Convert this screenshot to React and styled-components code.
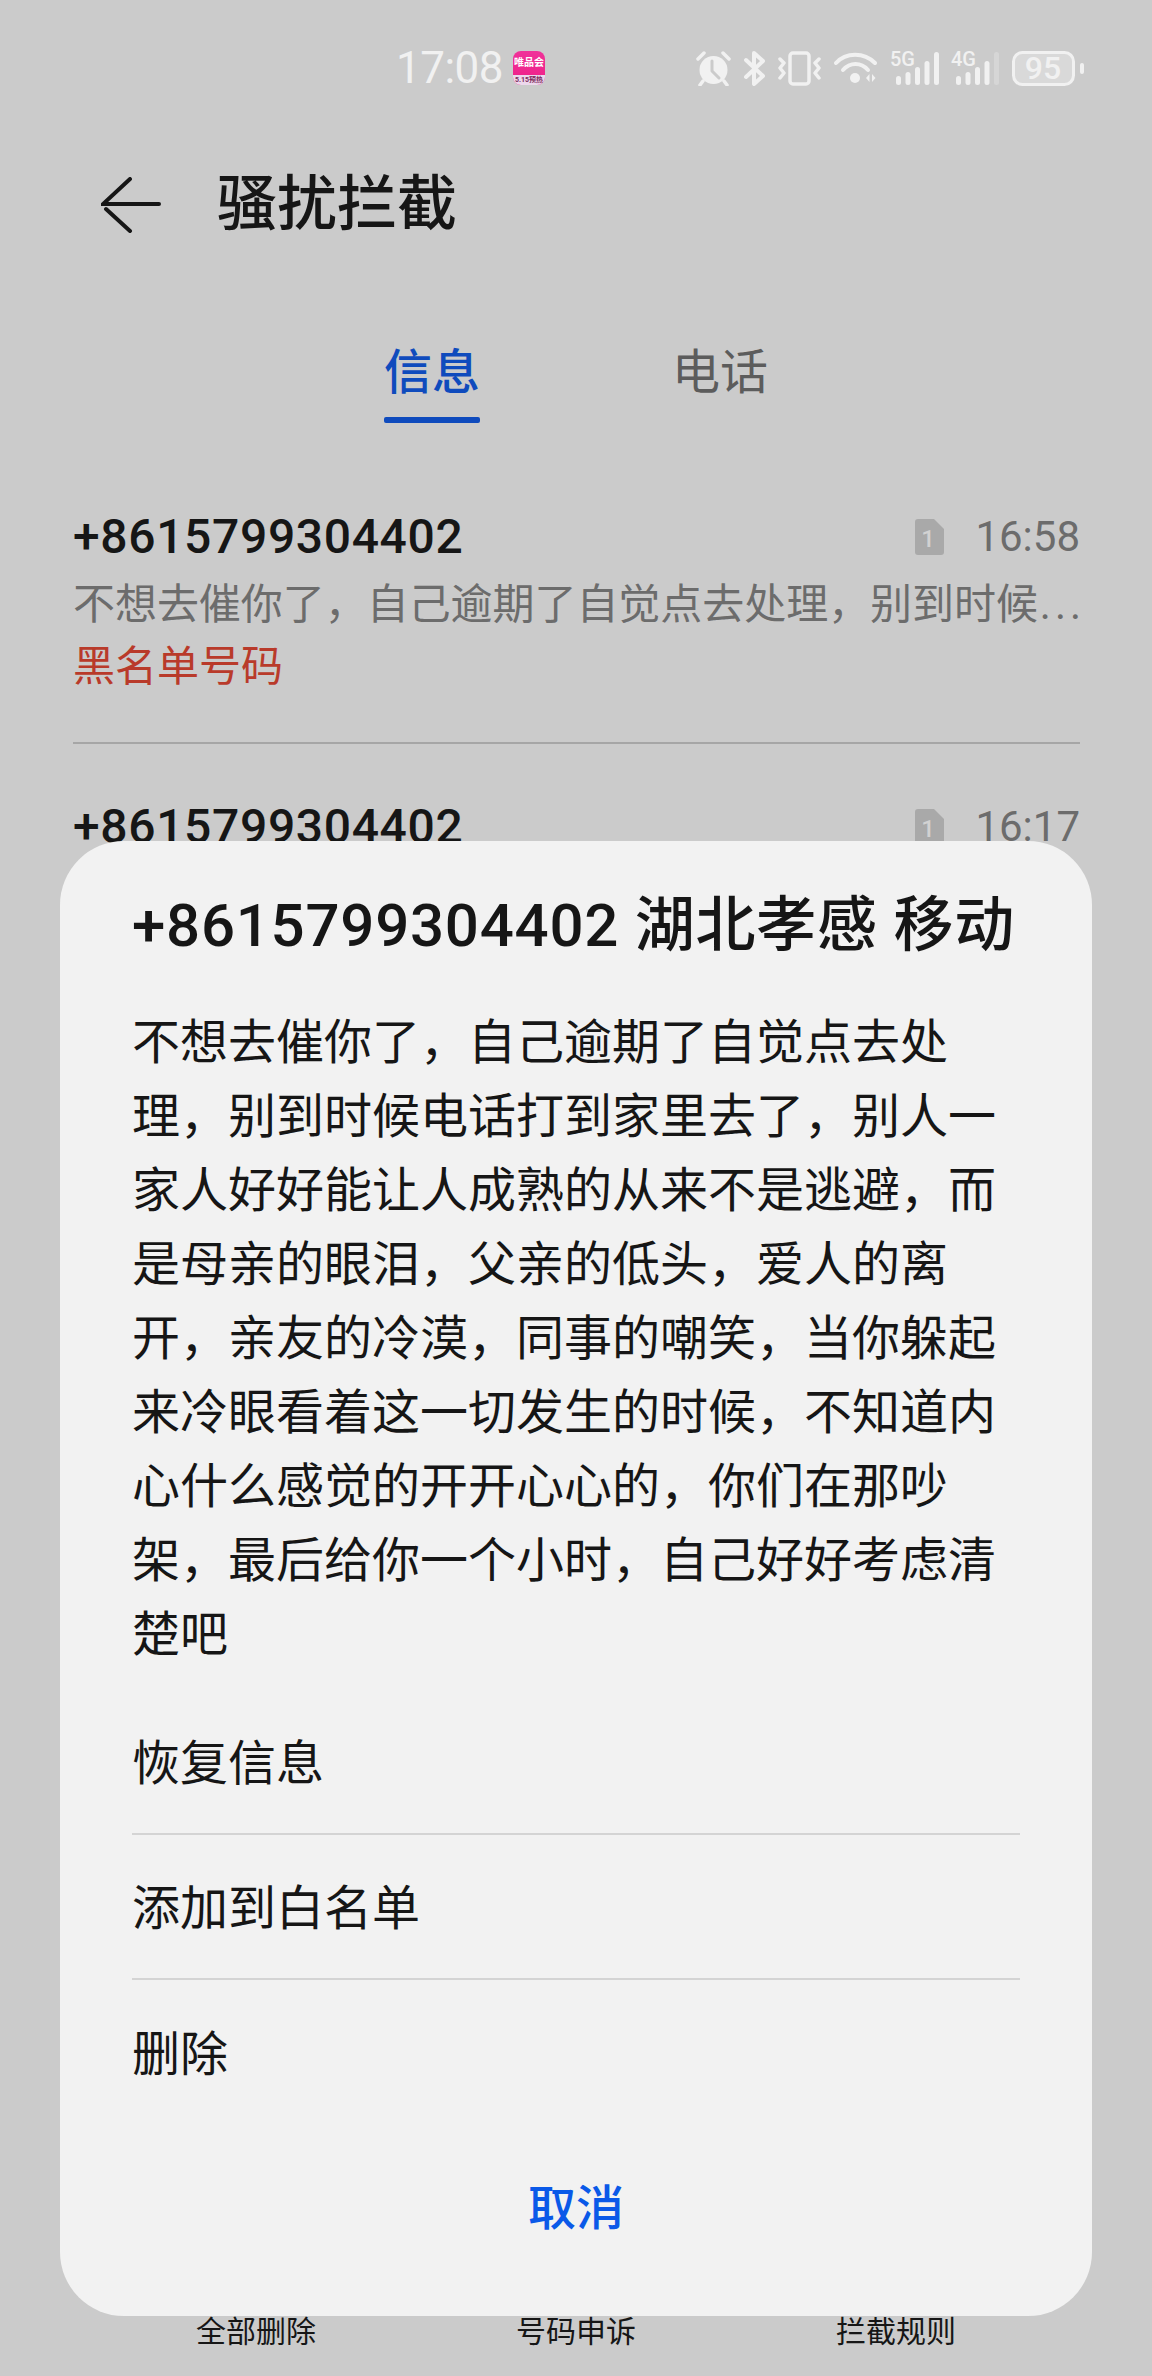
import React from 'react';
import styled, { createGlobalStyle } from 'styled-components';

const COLORS = {
  page: '#cbcbcb',
  sheet: '#f2f2f2',
  text: '#161616',
  muted: '#6c6c6c',
  tabOff: '#5c5c5c',
  tabOn: '#0f4bbd',
  action: '#0a59e8',
  red: '#b93a2a',
  line: '#a6a6a6',
  sheetLine: '#d4d4d4',
  status: '#f1f1f1',
};

const GlobalStyle = createGlobalStyle`
  html, body {
    margin: 0;
    padding: 0;
    background: ${COLORS.page};
  }
  body {
    font-family: Roboto, "Noto Sans CJK SC", sans-serif;
    color: ${COLORS.text};
  }
`;

const Page = styled.div`
  position: relative;
  width: 1152px;
  height: 2376px;
  overflow: hidden;
  display: flex;
  flex-direction: column;
  background: ${COLORS.page};
`;

const StatusBar = styled.div`
  height: 136px;
  box-sizing: border-box;
  padding: 0 68px 0 396px;
  display: flex;
  align-items: center;
  justify-content: space-between;
`;

const StatusGroup = styled.div`
  display: flex;
  align-items: center;
  gap: ${(p) => p.$gap}px;
`;

const Clock = styled.span`
  width: 104px;
  font-size: 44px;
  line-height: 50px;
  letter-spacing: -0.5px;
  color: ${COLORS.status};
`;

const AppTile = styled.div`
  width: 32px;
  height: 34px;
  border-radius: 8px;
  overflow: hidden;
  display: flex;
  flex-direction: column;
  background: linear-gradient(180deg, #f0329a, #ee1f86);
`;

const AppName = styled.span`
  flex: 1;
  font-size: 10px;
  line-height: 23px;
  font-weight: 700;
  text-align: center;
  color: #ffffff;
  white-space: nowrap;
`;

const AppBadge = styled.span`
  height: 10px;
  font-size: 7px;
  line-height: 10px;
  font-weight: 700;
  text-align: center;
  color: #7c2a5c;
  background: #ecd8ec;
  white-space: nowrap;
`;

const Header = styled.div`
  height: 138px;
  box-sizing: border-box;
  padding-left: 101px;
  display: flex;
  align-items: center;
  gap: 56px;
`;

const HeaderTitle = styled.h1`
  margin: 0;
  font-size: 60px;
  line-height: 80px;
  font-weight: 500;
  color: ${COLORS.text};
`;

const Tabs = styled.div`
  padding-top: 65px;
  display: flex;
  justify-content: center;
  gap: 192px;
`;

const Tab = styled.div`
  display: flex;
  flex-direction: column;
  align-items: center;
  font-size: 48px;
  line-height: 68px;
  font-weight: ${(p) => (p.$active ? 500 : 400)};
  color: ${(p) => (p.$active ? COLORS.tabOn : COLORS.tabOff)};
`;

const TabMark = styled.span`
  width: 96px;
  height: 6px;
  margin-top: 10px;
  border-radius: 2px;
  background: ${(p) => (p.$active ? COLORS.tabOn : 'transparent')};
`;

const List = styled.div`
  padding: 31px 72px 0 73px;
`;

const Row = styled.div`
  padding: 49px 0 46px;
  border-bottom: 2px solid ${COLORS.line};
`;

const RowTop = styled.div`
  display: flex;
  align-items: center;
  justify-content: space-between;
  height: 68px;
`;

const Phone = styled.span`
  font-size: 48px;
  line-height: 68px;
  font-weight: 500;
  letter-spacing: 0.65px;
  color: ${COLORS.text};
`;

const RowMeta = styled.div`
  display: flex;
  align-items: center;
  gap: 31px;
`;

const RowTime = styled.span`
  font-size: 42px;
  line-height: 68px;
  color: ${COLORS.muted};
`;

const Preview = styled.div`
  font-size: 42px;
  line-height: 67px;
  letter-spacing: -0.05px;
  color: ${COLORS.muted};
  white-space: nowrap;
`;

const PreviewDots = styled.span`
  letter-spacing: 4px;
  margin-left: 2px;
`;

const Tag = styled.div`
  font-size: 42px;
  line-height: 58px;
  color: ${COLORS.red};
`;

const BottomBar = styled.div`
  margin-top: auto;
  padding: 0 96px 24px;
  display: grid;
  grid-template-columns: repeat(3, 1fr);
  text-align: center;
  font-size: 30px;
  line-height: 40px;
  color: ${COLORS.text};
`;

const Sheet = styled.div`
  position: absolute;
  left: 60px;
  top: 841px;
  width: 1032px;
  height: 1475px;
  box-sizing: border-box;
  padding: 44px 72px 0;
  border-radius: 64px;
  background: ${COLORS.sheet};
`;

const SheetTitle = styled.h2`
  margin: 0 0 39px;
  font-size: 60px;
  line-height: 82px;
  font-weight: 500;
  white-space: nowrap;
  letter-spacing: 0.75px;
  color: ${COLORS.text};
`;

const SheetBody = styled.p`
  margin: 0 0 18px;
  font-size: 48px;
  line-height: 74px;
  color: ${COLORS.text};
`;

const SheetItem = styled.div`
  height: 145px;
  box-sizing: border-box;
  padding-bottom: 5px;
  display: flex;
  align-items: center;
  font-size: 48px;
  color: ${COLORS.text};
  border-bottom: ${(p) => (p.$last ? 'none' : `2px solid ${COLORS.sheetLine}`)};
`;

const CancelButton = styled.div`
  margin-top: 44px;
  font-size: 48px;
  line-height: 80px;
  font-weight: 500;
  text-align: center;
  color: ${COLORS.action};
`;

const BackArrow = () => (
  <svg width="60" height="56" viewBox="0 0 60 56" fill="none" stroke={COLORS.text} strokeWidth="4" strokeLinecap="round">
    <path d="M29 2 L2 27 H58" />
    <path d="M5 32 L29 54" />
  </svg>
);

const SimIcon = () => (
  <svg width="29" height="36" viewBox="0 0 29 36">
    <path d="M3 0 H19 L29 10 V33 a3 3 0 0 1 -3 3 H3 a3 3 0 0 1 -3 -3 V3 a3 3 0 0 1 3 -3 Z" fill="#a9a9a9" />
    <text x="13" y="28" fontSize="24" fontWeight="500" textAnchor="middle" fill="#d2d2d2" fontFamily="Roboto, sans-serif">1</text>
  </svg>
);

const AlarmIcon = () => (
  <svg width="35" height="35" viewBox="0 0 35 35" fill="none" stroke={COLORS.status}>
    <circle cx="17.5" cy="19" r="14" fill={COLORS.status} stroke="none" />
    <path d="M16 10 V20 L23 27" stroke={COLORS.page} strokeWidth="3" strokeLinecap="round" strokeLinejoin="round" />
    <path d="M2 8 L8 2 M33 8 L27 2 M7 30 L4 34 M28 30 L31 34" strokeWidth="3.5" strokeLinecap="round" />
  </svg>
);

const BluetoothIcon = () => (
  <svg width="21" height="35" viewBox="0 0 21 35" fill="none" stroke={COLORS.status} strokeWidth="4" strokeLinecap="round" strokeLinejoin="round">
    <path d="M2 9 L19 25 L10 33 V2 L19 10 L2 26" />
  </svg>
);

const VibrateIcon = () => (
  <svg width="43" height="35" viewBox="0 0 43 35" fill="none" stroke={COLORS.status} strokeWidth="3.5" strokeLinecap="round" strokeLinejoin="round">
    <rect x="12" y="2" width="19" height="31" rx="3" />
    <path d="M2 8 L6 12 L2 17 L6 22 L2 27" />
    <path d="M41 8 L37 12 L41 17 L37 22 L41 27" />
  </svg>
);

const WifiIcon = () => (
  <svg width="43" height="32" viewBox="0 0 43 32" fill="none" stroke={COLORS.status} strokeLinecap="round">
    <path d="M2 11 C12 0 30 0 41 11" strokeWidth="4" />
    <path d="M9 18 C16 10 27 10 34 18" strokeWidth="4" />
    <circle cx="21" cy="26" r="5" fill={COLORS.status} stroke="none" />
    <path d="M32 26 L35.5 22 V30 Z M38 22 L41.5 26 L38 30 Z" fill={COLORS.status} stroke="none" />
  </svg>
);

const SignalIcon = ({ label, dimLast }) => (
  <svg width="48" height="34" viewBox="0 0 48 34" overflow="visible">
    <text x="0" y="15" fontSize="20" fontWeight="500" fill={COLORS.status} fontFamily="Roboto, sans-serif">{label}</text>
    {[9, 13, 18, 24, 33].map((h, i) => (
      <rect
        key={i}
        x={6 + i * 9.5 - (dimLast ? 1 : 0)}
        y={34 - h}
        width="5"
        height={h}
        rx="2.5"
        fill={dimLast && i === 4 ? '#d6d6d6' : COLORS.status}
      />
    ))}
  </svg>
);

const BatteryIcon = () => (
  <svg width="72" height="35" viewBox="0 0 72 35" overflow="visible">
    <rect x="1.5" y="1.5" width="60" height="32" rx="9" fill="#d9d9d9" stroke={COLORS.status} strokeWidth="3" />
    <text x="31" y="28" fontSize="32" fontWeight="500" textAnchor="middle" fill={COLORS.status} fontFamily="Roboto, sans-serif">95</text>
    <rect x="68" y="12" width="4" height="11" rx="2" fill={COLORS.status} />
  </svg>
);

const MESSAGE_TEXT =
  '不想去催你了，自己逾期了自觉点去处理，别到时候电话打到家里去了，别人一家人好好能让人成熟的从来不是逃避，而是母亲的眼泪，父亲的低头，爱人的离开，亲友的冷漠，同事的嘲笑，当你躲起来冷眼看着这一切发生的时候，不知道内心什么感觉的开开心心的，你们在那吵架，最后给你一个小时，自己好好考虑清楚吧';

const PREVIEW_TEXT = MESSAGE_TEXT.slice(0, 23);

const ROWS = [{ time: '16:58' }, { time: '16:17' }];

function App() {
  return (
    <Page>
      <GlobalStyle />
      <StatusBar>
        <StatusGroup $gap={13}>
          <Clock>17:08</Clock>
          <AppTile>
            <AppName>唯品会</AppName>
            <AppBadge>5.15预热</AppBadge>
          </AppTile>
        </StatusGroup>
        <StatusGroup $gap={13}>
          <AlarmIcon />
          <BluetoothIcon />
          <VibrateIcon />
          <WifiIcon />
          <SignalIcon label="5G" />
          <SignalIcon label="4G" dimLast />
          <BatteryIcon />
        </StatusGroup>
      </StatusBar>

      <Header>
        <BackArrow />
        <HeaderTitle>骚扰拦截</HeaderTitle>
      </Header>

      <Tabs>
        <Tab $active>
          信息
          <TabMark $active />
        </Tab>
        <Tab>
          电话
          <TabMark />
        </Tab>
      </Tabs>

      <List>
        {ROWS.map((row) => (
          <Row key={row.time}>
            <RowTop>
              <Phone>+8615799304402</Phone>
              <RowMeta>
                <SimIcon />
                <RowTime>{row.time}</RowTime>
              </RowMeta>
            </RowTop>
            <Preview>
              {PREVIEW_TEXT}
              <PreviewDots>...</PreviewDots>
            </Preview>
            <Tag>黑名单号码</Tag>
          </Row>
        ))}
      </List>

      <BottomBar>
        <span>全部删除</span>
        <span>号码申诉</span>
        <span>拦截规则</span>
      </BottomBar>

      <Sheet>
        <SheetTitle>+8615799304402 湖北孝感 移动</SheetTitle>
        <SheetBody>{MESSAGE_TEXT}</SheetBody>
        <SheetItem>恢复信息</SheetItem>
        <SheetItem>添加到白名单</SheetItem>
        <SheetItem $last>删除</SheetItem>
        <CancelButton>取消</CancelButton>
      </Sheet>
    </Page>
  );
}

export default App;
